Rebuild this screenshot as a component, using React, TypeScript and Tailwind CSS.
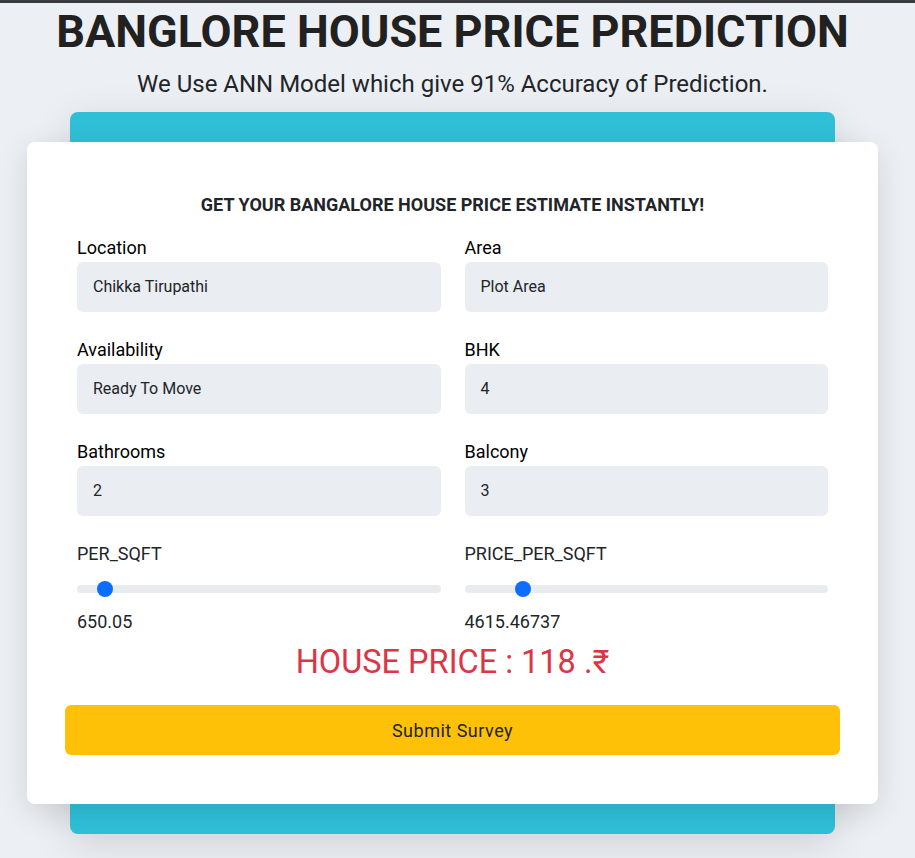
import React, { useState } from 'react';

const font = { fontFamily: 'Roboto, "Liberation Sans", sans-serif' };

const Field = ({ label, value }: { label: string; value: string }) => (
  <div className="flex flex-col">
    <label className="text-[18px] leading-[24px] text-black">{label}</label>
    <div className="mt-[2px] h-[50px] rounded-[6px] bg-[#eaedf2] px-4 flex items-center text-[16px] text-[#212529]">
      {value}
    </div>
  </div>
);

const Slider = ({ label, value, pct }: { label: string; value: string; pct: number }) => (
  <div className="flex flex-col">
    <label className="text-[18px] leading-[24px] text-[#212529]">{label}</label>
    <div className="relative mt-[19px] h-2 rounded-full bg-[#e9ecef]">
      <span
        className="absolute top-1/2 h-4 w-4 -translate-y-1/2 rounded-full bg-[#0d6efd]"
        style={{ left: `calc(${pct}% - ${(pct / 100) * 16}px)` }}
      />
    </div>
    <div className="mt-[17px] text-[18px] leading-[24px] text-[#212529]">{value}</div>
  </div>
);

export default function App() {
  const [price] = useState(118);

  return (
    <div className="min-h-[858px] bg-[#eceff3] border-t-[3px] border-[#3b3b3b]" style={font}>
      <div className="w-[905px]">
        <h1 className="pt-[3px] text-center text-[45px] leading-[52px] font-bold text-[#212121]">
          BANGLORE HOUSE PRICE PREDICTION
        </h1>
        <p className="mt-[11px] text-center text-[24px] leading-[30px] text-[#212529]">
          We Use ANN Model which give 91% Accuracy of Prediction.
        </p>

        {/* cyan backdrop with the form card over it */}
        <div className="mx-auto mt-[13px] w-[765px] rounded-[8px] bg-[#2fc0d8] py-[30px] shadow-[0_10px_40px_rgba(0,0,0,0.12)]">
          <div className="-mx-[43px] rounded-[8px] bg-white px-[38px] pt-[51px] pb-[49px] shadow-[0_8px_30px_rgba(0,0,0,0.12)]">
            <h2 className="text-center text-[18px] leading-[24px] font-bold text-[#212529]">
              GET YOUR BANGALORE HOUSE PRICE ESTIMATE INSTANTLY!
            </h2>

            <div className="mx-[12px] mt-[19px] grid grid-cols-2 gap-x-6 gap-y-[26px]">
              <Field label="Location" value="Chikka Tirupathi" />
              <Field label="Area" value="Plot Area" />
              <Field label="Availability" value="Ready To Move" />
              <Field label="BHK" value="4" />
              <Field label="Bathrooms" value="2" />
              <Field label="Balcony" value="3" />
              <Slider label="PER_SQFT" value="650.05" pct={5.8} />
              <Slider label="PRICE_PER_SQFT" value="4615.46737" pct={14.4} />
            </div>

            <div className="mt-[8px] text-center text-[32.5px] leading-[40px] font-normal text-[#dc3545]">
              HOUSE PRICE : {price} .₹
            </div>

            <button className="mt-[23px] h-[50px] w-full rounded-[6px] bg-[#ffc107] text-[18px] tracking-[0.5px] text-[#212529]">
              Submit Survey
            </button>
          </div>
        </div>
      </div>
    </div>
  );
}
